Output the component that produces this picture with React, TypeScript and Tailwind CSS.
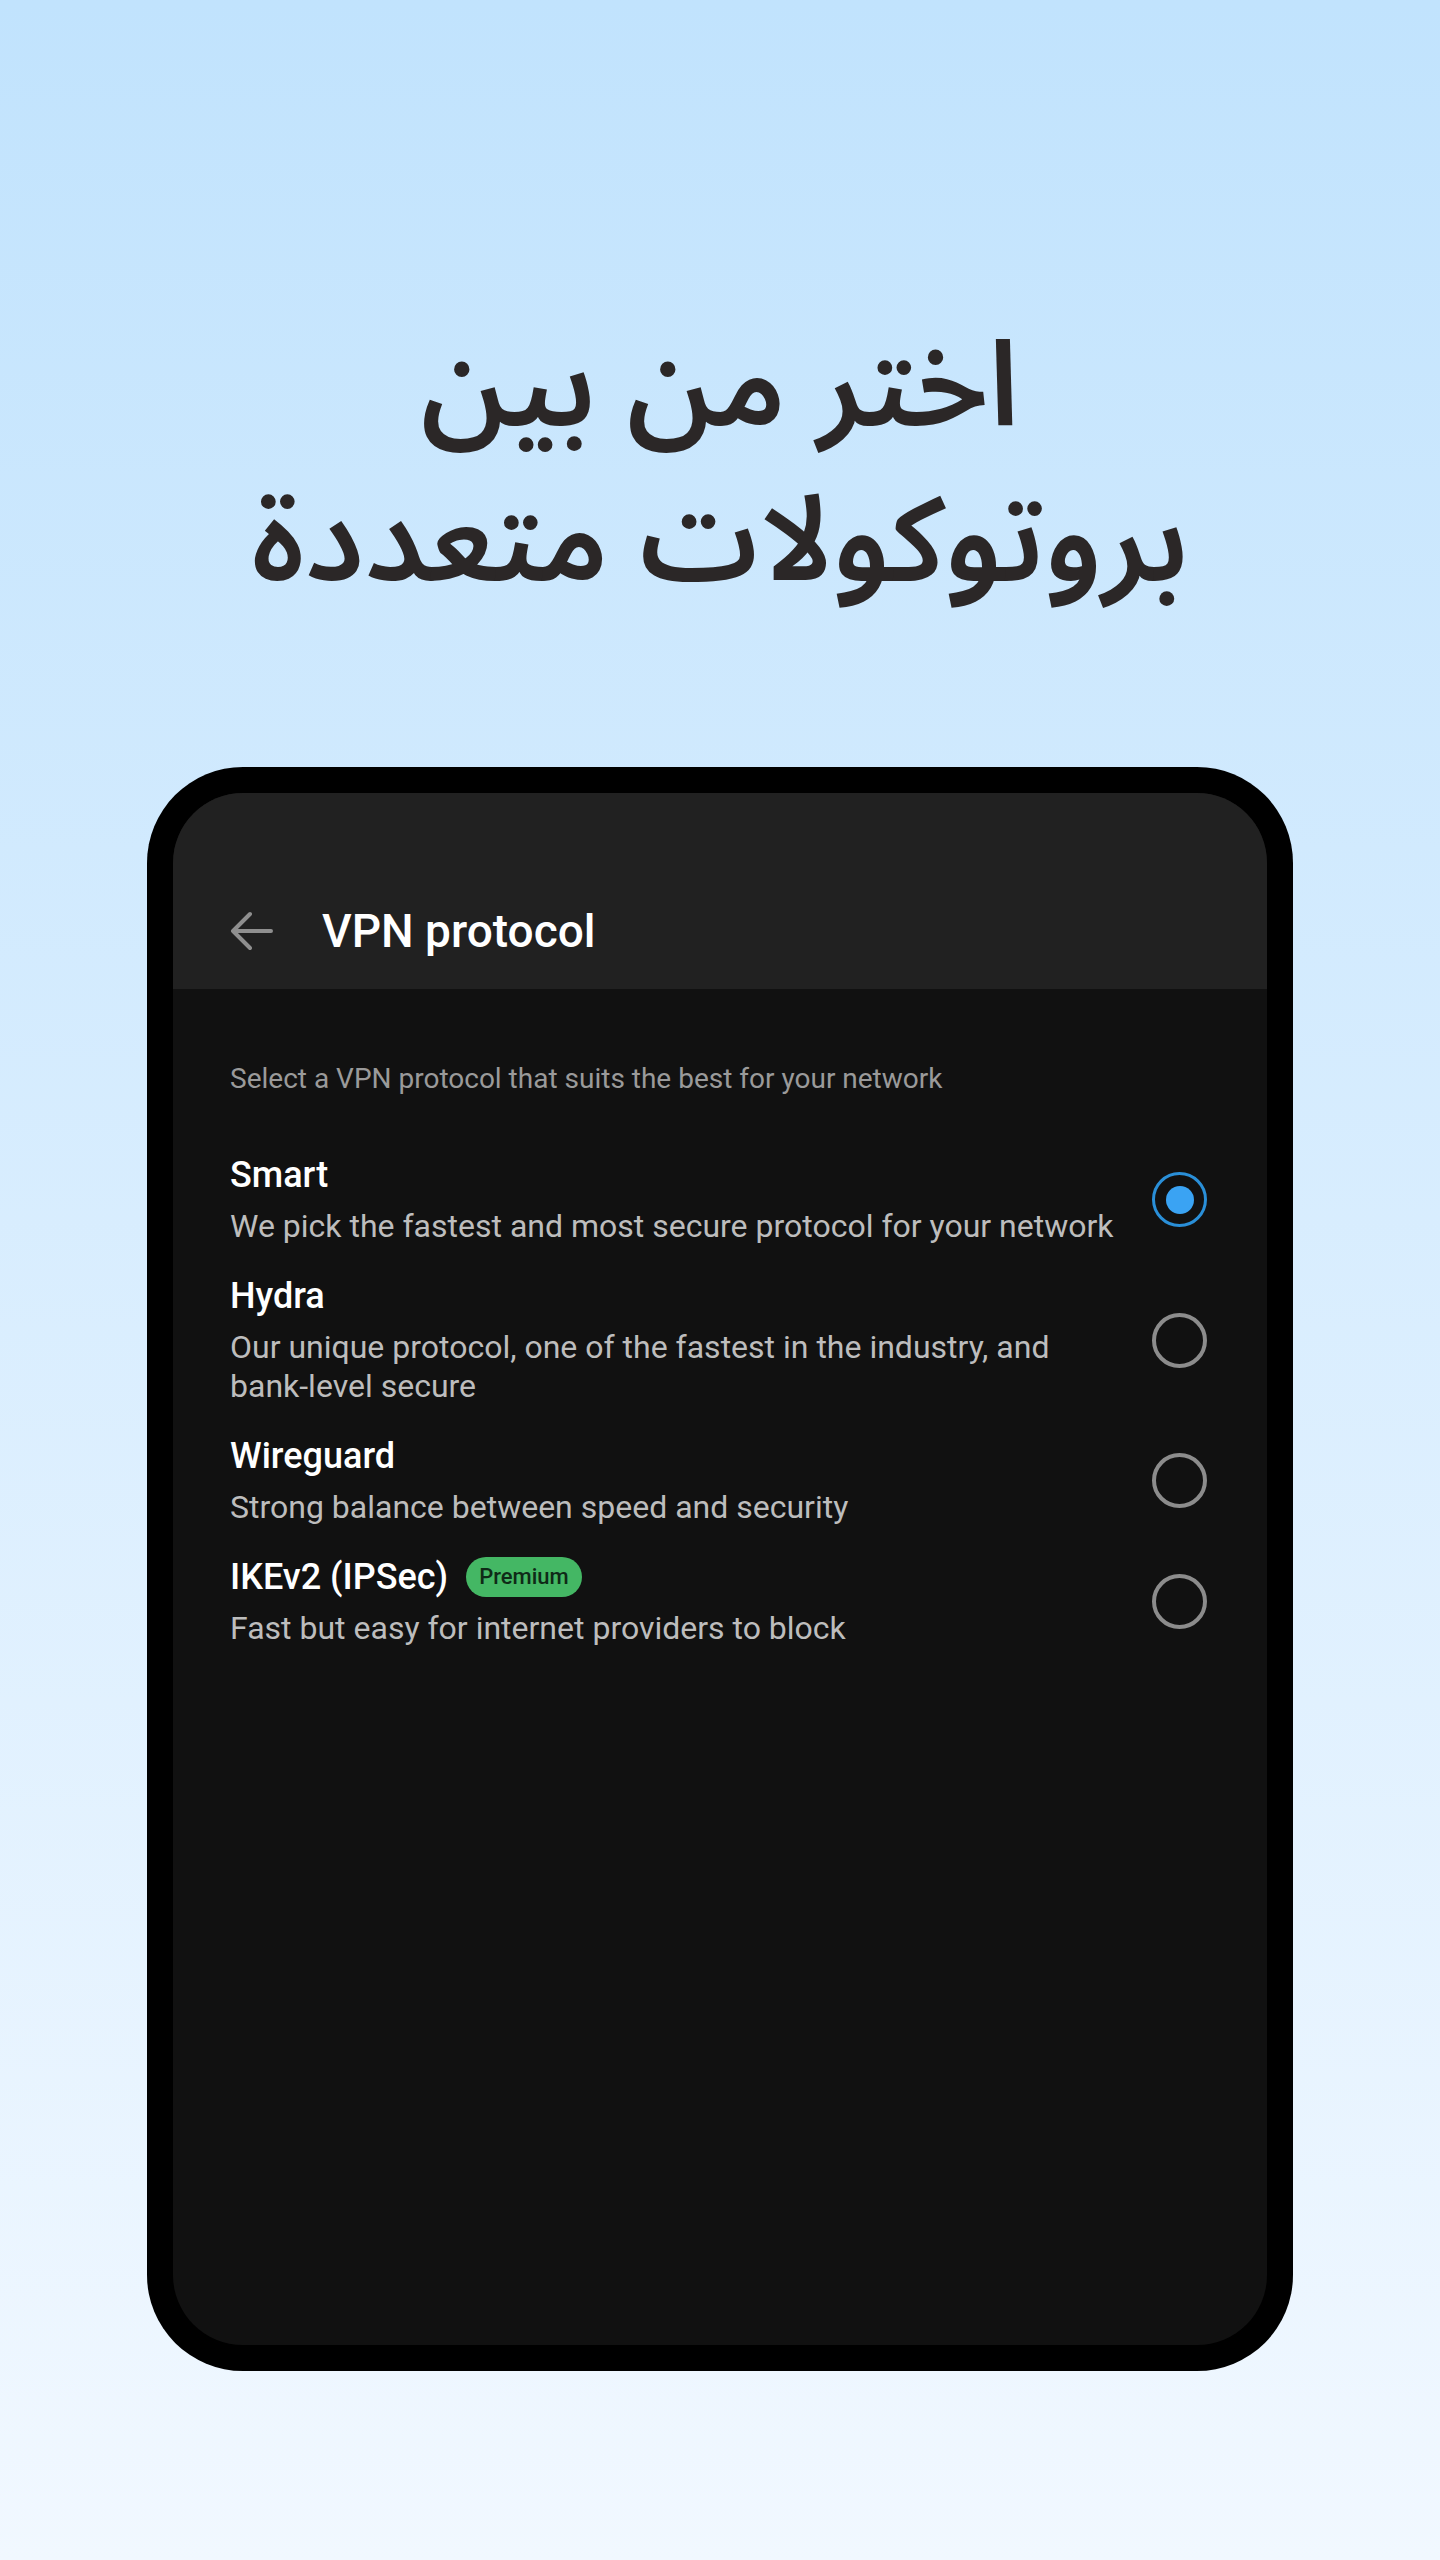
import React from "react";

const protocols = [
  {
    name: "Smart",
    desc: "We pick the fastest and most secure protocol for your network",
    selected: true,
  },
  {
    name: "Hydra",
    desc: "Our unique protocol, one of the fastest in the industry, and bank-level secure",
  },
  {
    name: "Wireguard",
    desc: "Strong balance between speed and security",
  },
  {
    name: "IKEv2 (IPSec)",
    desc: "Fast but easy for internet providers to block",
    premium: true,
  },
];

const BackArrow = () => (
  <svg width="44" height="40" viewBox="0 0 44 40" fill="none">
    <path
      d="M41 20H4M20 3L3 20l17 17"
      stroke="#8f8f8f"
      strokeWidth="4"
      strokeLinecap="round"
      strokeLinejoin="round"
    />
  </svg>
);

const Radio = ({ on }: { on?: boolean }) =>
  on ? (
    <div className="flex h-[55px] w-[55px] items-center justify-center rounded-full border-[3px] border-[#2a8fd8]">
      <div className="h-[28px] w-[28px] rounded-full bg-[#3aa3f3]" />
    </div>
  ) : (
    <div className="h-[55px] w-[55px] rounded-full border-[4px] border-[#8c8c8c]" />
  );

export default function App() {
  return (
    <div className="min-h-[2560px] w-full bg-gradient-to-b from-[#c1e3fd] to-[#f1f8ff] pt-[310px]">
      <h1
        dir="rtl"
        className="text-center text-[119px] leading-[155px] font-semibold text-[#2b2727]"
        style={{ fontFamily: '"Noto Sans Arabic", "Noto Sans", "DejaVu Sans", sans-serif' }}
      >
        اختر من بين
        <br />
        بروتوكولات متعددة
      </h1>

      {/* phone frame */}
      <div className="mx-auto mt-[147px] h-[1604px] w-[1146px] rounded-[96px] bg-black p-[26px]">
        <div
          className="flex h-full flex-col overflow-hidden rounded-[70px] bg-[#111111]"
          style={{ fontFamily: "Roboto, 'Liberation Sans', sans-serif" }}
        >
          <div className="flex h-[196px] shrink-0 items-end bg-[#212121] pb-[18px] pl-[57px]">
            <div className="flex h-[80px] items-center">
              <BackArrow />
              <span className="ml-[48px] text-[46px] font-medium text-white">VPN protocol</span>
            </div>
          </div>

          <div className="px-[57px] pt-[72px]">
            <p className="text-[28px] leading-[36px] text-[#9a9a9a]">
              Select a VPN protocol that suits the best for your network
            </p>

            <div className="mt-[56px] flex flex-col gap-[28px]">
              {protocols.map((p) => (
                <div key={p.name} className="flex items-center justify-between">
                  <div className="max-w-[905px]">
                    <div className="flex items-center">
                      <span className="text-[36px] leading-[44px] font-medium text-white">{p.name}</span>
                      {p.premium && (
                        <span className="ml-[18px] rounded-full bg-[#44b764] px-[13px] text-[22px] leading-[40px] font-medium text-[#0f2a17]">
                          Premium
                        </span>
                      )}
                    </div>
                    <p className="mt-[10px] text-[32px] leading-[39px] text-[#bdbdbd]">{p.desc}</p>
                  </div>
                  <div className="mr-[3px]">
                    <Radio on={p.selected} />
                  </div>
                </div>
              ))}
            </div>
          </div>
        </div>
      </div>
    </div>
  );
}
